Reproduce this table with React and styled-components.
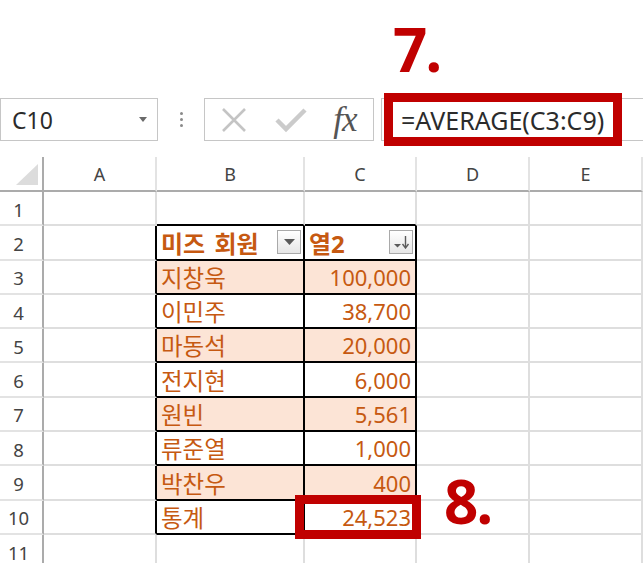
import React from 'react';
import styled, { createGlobalStyle } from 'styled-components';

const GlobalStyle = createGlobalStyle`
  html, body {
    margin: 0;
    padding: 0;
    background: #fff;
  }
  body {
    font-family: "Noto Sans", "Noto Sans CJK KR", sans-serif;
  }
`;

const COLS = [44, 113, 148, 112, 113, 113];
const ROW_H = 34.3;
const GRID = '#dedede';
const HEAD_LINE = '#ababab';
const INK = '#000';
const ORANGE = '#c65911';
const BAND = '#fce4d6';
const RED = '#c00000';

const Page = styled.div`
  position: relative;
  width: 643px;
  height: 563px;
  overflow: hidden;
  display: flex;
  flex-direction: column;
  background: #fff;
  & > * {
    flex-shrink: 0;
  }
`;

const TopBand = styled.div`
  height: 93px;
  display: flex;
  align-items: flex-end;
  padding-left: 393px;
  box-sizing: border-box;
`;

const Callout = styled.div`
  font-family: "Open Sans", "Noto Sans", sans-serif;
  font-weight: 700;
  font-size: 60px;
  line-height: 1;
  letter-spacing: -2px;
  color: ${RED};
  margin-bottom: 14px;
`;

const FormulaBar = styled.div`
  height: 53px;
  display: flex;
  align-items: center;
`;

const NameBox = styled.div`
  width: 158px;
  height: 43px;
  box-sizing: border-box;
  border: 1px solid #c6c6c6;
  display: flex;
  align-items: center;
  justify-content: space-between;
  padding: 0 10px 0 11px;
  font-size: 23px;
  color: #2b2b2b;
`;

const Caret = styled.span`
  width: 0;
  height: 0;
  border-left: 4px solid transparent;
  border-right: 4px solid transparent;
  border-top: 5px solid #6a6a6a;
`;

const Grip = styled.div`
  width: 4px;
  margin: 0 20px 0 22px;
  display: flex;
  flex-direction: column;
  gap: 3px;
  span {
    width: 3px;
    height: 3px;
    border-radius: 50%;
    background: #8a8a8a;
  }
`;

const ActionBox = styled.div`
  width: 170px;
  height: 43px;
  box-sizing: border-box;
  border: 1px solid #c6c6c6;
  display: flex;
  align-items: center;
  padding-left: 16px;
`;

const ActionIcon = styled.div`
  width: ${({ $w }) => $w}px;
  margin-right: ${({ $gap }) => $gap}px;
  display: flex;
  justify-content: center;
  align-items: center;
`;

const Fx = styled.span`
  font-family: "Liberation Serif", "DejaVu Serif", serif;
  font-style: italic;
  font-size: 35px;
  line-height: 1;
  color: #555;
  letter-spacing: -1px;
`;

const FormulaInput = styled.div`
  position: relative;
  flex: 1;
  height: 43px;
  margin-left: 7px;
  margin-right: -4px;
  box-sizing: border-box;
  border: 1px solid #c6c6c6;
`;

const FormulaHighlight = styled.div`
  position: absolute;
  left: 2px;
  top: -6px;
  width: 238px;
  height: 53px;
  box-sizing: border-box;
  border: 9px solid ${RED};
  background: #fff;
  display: flex;
  align-items: center;
  padding-left: 8px;
  font-size: 25px;
  color: #2b2b2b;
  white-space: nowrap;
`;

const Sheet = styled.div`
  margin-top: 11px;
  display: grid;
  grid-template-columns: ${COLS.map((c) => `${c}px`).join(' ')};
  grid-template-rows: 35px repeat(11, ${ROW_H}px);
`;

const Corner = styled.div`
  border-right: 2px solid ${HEAD_LINE};
  border-bottom: 2px solid ${HEAD_LINE};
  display: flex;
  align-items: flex-end;
  justify-content: flex-end;
  padding: 0 4px 5px 0;
  box-sizing: border-box;
`;

const CornerMark = styled.div`
  width: 0;
  height: 0;
  border-left: 22px solid transparent;
  border-bottom: 21px solid #dcdcdc;
`;

const ColHead = styled.div`
  box-sizing: border-box;
  border-right: 2px solid #e3e3e3;
  border-bottom: 2px solid ${HEAD_LINE};
  display: flex;
  align-items: center;
  justify-content: center;
  font-size: 18px;
  color: #444;
`;

const RowHead = styled.div`
  box-sizing: border-box;
  border-right: 2px solid ${HEAD_LINE};
  border-bottom: 2px solid #e3e3e3;
  display: flex;
  align-items: center;
  justify-content: center;
  padding: 2px 5px 0 0;
  font-size: 18.5px;
  color: #444;
`;

const Cell = styled.div`
  position: ${({ $anchor }) => ($anchor ? 'relative' : 'static')};
  box-sizing: border-box;
  border-right: 2px solid ${({ $r }) => $r || GRID};
  border-bottom: 2px solid ${({ $b }) => $b || GRID};
  background: ${({ $fill }) => $fill || '#fff'};
  display: flex;
  align-items: center;
  justify-content: ${({ $right }) => ($right ? 'flex-end' : 'space-between')};
  padding: 0 ${({ $right }) => ($right ? 4 : 2)}px 0 4px;
  font-family: "Noto Sans", "Noto Sans CJK KR", sans-serif;
  font-size: ${({ $right, $bold }) => ($right ? 22 : $bold ? 24 : 23.5)}px;
  font-weight: ${({ $bold }) => ($bold ? 700 : 400)};
  word-spacing: ${({ $bold }) => ($bold ? 3 : 0)}px;
  color: ${ORANGE};
  white-space: nowrap;
`;

const FilterButton = styled.div`
  width: 24px;
  height: 24px;
  box-sizing: border-box;
  border: 1px solid #a9a9a9;
  background: linear-gradient(#ffffff, #e6e6e6);
  display: flex;
  align-items: center;
  justify-content: center;
`;

const CellHighlight = styled.div`
  position: absolute;
  left: -10px;
  right: -6px;
  top: -6px;
  bottom: -6px;
  border: 9px solid ${RED};
  pointer-events: none;
`;

const CellCallout = styled(Callout)`
  position: absolute;
  left: 139px;
  top: -30px;
  margin: 0;
`;

const CrossIcon = () => (
  <svg width="26" height="26" viewBox="0 0 26 26">
    <path d="M2 2 L24 24 M24 2 L2 24" stroke="#c4c4c4" strokeWidth="2.6" fill="none" />
  </svg>
);

const CheckIcon = () => (
  <svg width="32" height="26" viewBox="0 0 32 26">
    <path d="M2 13 L11 22 L30 3" stroke="#cbcbcb" strokeWidth="4.5" fill="none" strokeLinejoin="miter" />
  </svg>
);

const DropIcon = () => (
  <svg width="11" height="7" viewBox="0 0 11 7">
    <path d="M0 0 H11 L5.5 6 Z" fill="#5a5a5a" />
  </svg>
);

const SortIcon = () => (
  <svg width="17" height="14" viewBox="0 0 17 14">
    <path d="M1 9 H8 L4.5 12.5 Z" fill="#5a5a5a" />
    <path d="M12.5 1 V12" stroke="#5a5a5a" strokeWidth="1.4" />
    <path d="M9.5 9 L12.5 13 L15.5 9" stroke="#5a5a5a" strokeWidth="1.4" fill="none" />
  </svg>
);

const members = [
  { name: '지창욱', value: '100,000', band: true },
  { name: '이민주', value: '38,700' },
  { name: '마동석', value: '20,000', band: true },
  { name: '전지현', value: '6,000' },
  { name: '원빈', value: '5,561', band: true },
  { name: '류준열', value: '1,000' },
  { name: '박찬우', value: '400', band: true },
  { name: '통계', value: '24,523', picked: true },
];

const letters = ['A', 'B', 'C', 'D', 'E'];

const App = () => {
  return (
    <>
      <GlobalStyle />
      <Page>
        <TopBand>
          <Callout>7.</Callout>
        </TopBand>

        <FormulaBar>
          <NameBox>
            C10
            <Caret />
          </NameBox>
          <Grip>
            <span />
            <span />
            <span />
          </Grip>
          <ActionBox>
            <ActionIcon $w={26} $gap={28}>
              <CrossIcon />
            </ActionIcon>
            <ActionIcon $w={32} $gap={22}>
              <CheckIcon />
            </ActionIcon>
            <ActionIcon $w={32} $gap={0}>
              <Fx>fx</Fx>
            </ActionIcon>
          </ActionBox>
          <FormulaInput>
            <FormulaHighlight>=AVERAGE(C3:C9)</FormulaHighlight>
          </FormulaInput>
        </FormulaBar>

        <Sheet>
          <Corner>
            <CornerMark />
          </Corner>
          {letters.map((l) => (
            <ColHead key={l}>{l}</ColHead>
          ))}

          <RowHead>1</RowHead>
          <Cell />
          <Cell $b={INK} />
          <Cell $b={INK} />
          <Cell />
          <Cell />

          <RowHead>2</RowHead>
          <Cell $r={INK} />
          <Cell $r={INK} $b={INK} $bold>
            미즈 회원
            <FilterButton>
              <DropIcon />
            </FilterButton>
          </Cell>
          <Cell $r={INK} $b={INK} $bold>
            열2
            <FilterButton>
              <SortIcon />
            </FilterButton>
          </Cell>
          <Cell />
          <Cell />

          {members.map((m, i) => (
            <React.Fragment key={m.name}>
              <RowHead>{i + 3}</RowHead>
              <Cell $r={INK} />
              <Cell $r={INK} $b={INK} $fill={m.band ? BAND : undefined}>
                {m.name}
              </Cell>
              <Cell $r={INK} $b={INK} $fill={m.band ? BAND : undefined} $right $anchor={m.picked}>
                {m.value}
                {m.picked && (
                  <>
                    <CellHighlight />
                    <CellCallout>8.</CellCallout>
                  </>
                )}
              </Cell>
              <Cell />
              <Cell />
            </React.Fragment>
          ))}

          <RowHead>11</RowHead>
          <Cell />
          <Cell />
          <Cell />
          <Cell />
          <Cell />
        </Sheet>
      </Page>
    </>
  );
};

export default App;
